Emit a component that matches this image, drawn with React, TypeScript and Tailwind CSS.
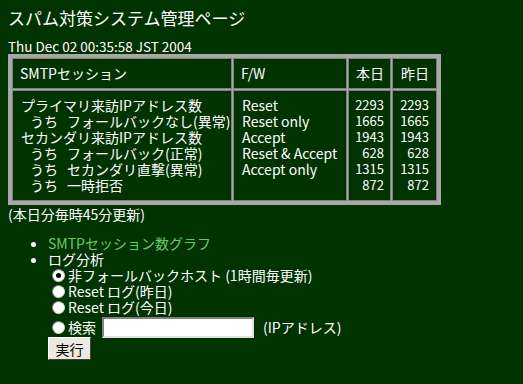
import React from 'react';

const rows = [
  { label: 'プライマリ来訪IPアドレス数', indent: false, fw: 'Reset', today: '2293', yday: '2293' },
  { label: 'フォールバックなし(異常)', indent: true, fw: 'Reset only', today: '1665', yday: '1665' },
  { label: 'セカンダリ来訪IPアドレス数', indent: false, fw: 'Accept', today: '1943', yday: '1943' },
  { label: 'フォールバック(正常)', indent: true, fw: 'Reset & Accept', today: '628', yday: '628' },
  { label: 'セカンダリ直撃(異常)', indent: true, fw: 'Accept only', today: '1315', yday: '1315' },
  { label: '一時拒否', indent: true, fw: '', today: '872', yday: '872' },
];

function Radio({ checked }: { checked?: boolean }) {
  return (
    <span className="inline-flex w-[13px] h-[13px] rounded-full bg-white border border-t-[#808080] border-l-[#808080] border-b-[#d4d0c8] border-r-[#d4d0c8] items-center justify-center shrink-0">
      {checked && <span className="w-[5px] h-[5px] rounded-full bg-black" />}
    </span>
  );
}

export default function App() {
  const cell = 'bg-[#003300] border border-[#808080] align-top';

  return (
    <div className="min-h-screen bg-[#003300] text-white px-2 pt-[6px] font-['Noto_Sans_CJK_JP',sans-serif] text-[14px] leading-[16px]">
      <h1 className="text-[17px] leading-[24px]">スパム対策システム管理ページ</h1>
      <div className="mt-[8px] text-[13.5px]">Thu Dec 02 00:35:58 JST 2004</div>

      <table className="table-fixed border-separate border-spacing-[1px] border-[3px] border-[#a8a8a8] bg-[#a8a8a8] w-[433px]">
        <thead>
          <tr>
            <td className={`${cell} w-[220px] px-[7px] pt-[6px] pb-[7px]`}>SMTPセッション</td>
            <td className={`${cell} w-[114px] px-[7px] pt-[6px] pb-[7px]`}>F/W</td>
            <td className={`${cell} w-[43px] px-[6px] pt-[6px] pb-[7px] text-right`}>本日</td>
            <td className={`${cell} w-[45px] px-[7px] pt-[6px] pb-[7px] text-right`}>昨日</td>
          </tr>
        </thead>
        <tbody>
          <tr>
            <td className={`${cell} px-[8px] pt-[6px] pb-[7px]`}>
              {rows.map((r, i) => (
                <div key={i} className="whitespace-nowrap">
                  {r.indent ? (
                    <>
                      <span className="ml-[9px]">うち</span>
                      <span className="ml-[9px]">{r.label}</span>
                    </>
                  ) : (
                    r.label
                  )}
                </div>
              ))}
            </td>
            <td className={`${cell} px-[8px] pt-[6px] pb-[7px]`}>
              {rows.map((r, i) => (
                <div key={i} className="whitespace-nowrap h-[16px]">{r.fw}</div>
              ))}
            </td>
            <td className={`${cell} px-[6px] pt-[6px] pb-[7px] text-right text-[13px]`}>
              {rows.map((r, i) => (
                <div key={i}>{r.today}</div>
              ))}
            </td>
            <td className={`${cell} px-[7px] pt-[6px] pb-[7px] text-right text-[13px]`}>
              {rows.map((r, i) => (
                <div key={i}>{r.yday}</div>
              ))}
            </td>
          </tr>
        </tbody>
      </table>

      <div className="mt-[1px]">(本日分毎時45分更新)</div>

      <ul className="list-disc pl-[40px] mt-[13px] marker:text-white">
        <li>
          <a href="#" className="text-[#66cc66]">SMTPセッション数グラフ</a>
        </li>
        <li>
          ログ分析
          <div className="ml-[4px]">
            <label className="flex items-center gap-[3px] h-[16px]">
              <Radio checked />
              <span>非フォールバックホスト (1時間毎更新)</span>
            </label>
            <label className="flex items-center gap-[3px] h-[16px]">
              <Radio />
              <span>Reset ログ(昨日)</span>
            </label>
            <label className="flex items-center gap-[3px] h-[16px]">
              <Radio />
              <span>Reset ログ(今日)</span>
            </label>
            <div className="flex items-center gap-[3px] h-[24px]">
              <Radio />
              <span>検索</span>
              <input
                type="text"
                className="ml-[3px] w-[152px] h-[21px] bg-white border-2 border-t-[#808080] border-l-[#808080] border-b-[#e0e0e0] border-r-[#e0e0e0] outline-none"
              />
              <span className="ml-[6px]">(IPアドレス)</span>
            </div>
          </div>
          <button className="-mt-[2px] w-[43px] h-[23px] bg-[#ece9e0] text-black border border-t-[#ffffff] border-l-[#ffffff] border-b-[#404040] border-r-[#404040] text-[14px] leading-[20px]">
            実行
          </button>
        </li>
      </ul>
    </div>
  );
}
